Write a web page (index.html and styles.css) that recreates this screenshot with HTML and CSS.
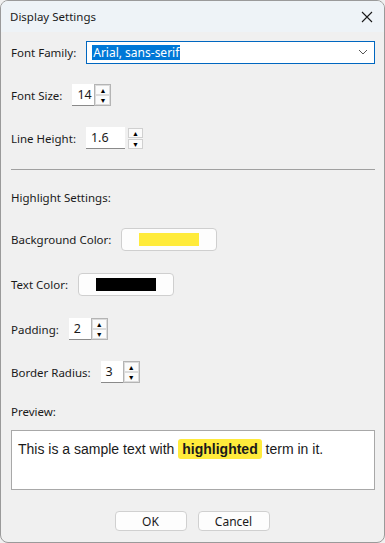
FILE: index.html
```html
<!DOCTYPE html>
<html lang="en">
  <head>
    <meta charset="UTF-8" />
    <title>Display Settings</title>
    <link rel="stylesheet" href="styles.css">
  </head>
  <body>
    <div class="window">
      <div class="titlebar">
        <span class="title">Display Settings</span>
        <svg class="close" width="12" height="12" viewBox="0 0 12 12">
          <path d="M1 1 L11 11 M11 1 L1 11" stroke="#1a1a1a" stroke-width="1.1" fill="none" />
        </svg>
      </div>

      <div class="content">
        <div class="row row-family">
          <label>Font Family:</label>
          <div class="combo">
            <span class="combo-text">Arial, sans-serif</span>
            <svg class="chevron" width="10" height="6" viewBox="0 0 10 6">
              <path d="M1 1 L5 5 L9 1" stroke="#555" stroke-width="1" fill="none" />
            </svg>
          </div>
        </div>

        <div class="row row-next">
          <label>Font Size:</label>
          <div class="spin">
            <span class="spin-input w22">14</span>
            <div class="spin-btns">
              <span class="spin-btn">&#9650;</span>
              <span class="spin-btn">&#9660;</span>
            </div>
          </div>
        </div>

        <div class="row row-next">
          <label>Line Height:</label>
          <div class="spin">
            <span class="spin-input w39">1.6</span>
            <div class="spin-btns apart">
              <span class="spin-btn">&#9650;</span>
              <span class="spin-btn">&#9660;</span>
            </div>
          </div>
        </div>

        <hr class="sep" />

        <div class="row row-heading">
          <label>Highlight Settings:</label>
        </div>

        <div class="row row-bg">
          <label>Background Color:</label>
          <button class="color-btn"><span class="swatch yellow"></span></button>
        </div>

        <div class="row row-wide">
          <label>Text Color:</label>
          <button class="color-btn"><span class="swatch black"></span></button>
        </div>

        <div class="row row-wide">
          <label>Padding:</label>
          <div class="spin">
            <span class="spin-input w22">2</span>
            <div class="spin-btns">
              <span class="spin-btn">&#9650;</span>
              <span class="spin-btn">&#9660;</span>
            </div>
          </div>
        </div>

        <div class="row row-next">
          <label>Border Radius:</label>
          <div class="spin">
            <span class="spin-input w22">3</span>
            <div class="spin-btns">
              <span class="spin-btn">&#9650;</span>
              <span class="spin-btn">&#9660;</span>
            </div>
          </div>
        </div>

        <div class="row row-preview-label">
          <label>Preview:</label>
        </div>

        <div class="preview">
          This is a sample text with <span class="mark">highlighted</span> term in it.
        </div>

        <div class="actions">
          <button class="btn">OK</button>
          <button class="btn">Cancel</button>
        </div>
      </div>
    </div>
  </body>
</html>
```

FILE: styles.css
```css
body {
  margin: 0;
  background: #f0f0f0;
  font-family: "Noto Sans", "Open Sans", sans-serif;
  font-size: 11.5px;
  color: #1a1a1a;
}
.window {
  box-sizing: border-box;
  width: 385px;
  height: 543px;
  border: 1px solid #9a9a9a;
  border-radius: 8px;
  background: #f0f0f0;
  overflow: hidden;
}
.titlebar {
  height: 31px;
  display: flex;
  align-items: center;
  justify-content: space-between;
  padding: 0 9px 0 9px;
  background: #eef3f7;
}
.title {
  font-size: 11.5px;
}
.close {
  margin-right: 2px;
}
.content {
  display: flex;
  flex-direction: column;
  padding: 0 9px 0 10px;
}
.row {
  display: flex;
  align-items: center;
  height: 22px;
}
.row label {
  margin-right: 10px;
  white-space: nowrap;
}
.row-family {
  margin-top: 9px;
}
.row-next {
  margin-top: 21px;
}
.row-wide {
  margin-top: 23px;
}
.row-heading {
  margin-top: 16px;
}
.row-bg {
  margin-top: 20px;
}
.row-preview-label {
  margin-top: 17px;
}
.combo {
  flex: 1;
  box-sizing: border-box;
  height: 23px;
  display: flex;
  align-items: center;
  justify-content: space-between;
  background: #fff;
  border: 1px solid #0067c0;
  padding: 0 6px 0 5px;
}
.combo-text {
  background: #0078d7;
  color: #fff;
  font-size: 12px;
  line-height: 15px;
  padding: 0 1px;
}
.sep {
  border: none;
  border-top: 1px solid #a0a0a0;
  margin: 20px 0 0 0;
}
.spin {
  display: flex;
  align-items: center;
}
.spin-input {
  box-sizing: border-box;
  height: 22px;
  background: #fff;
  border-bottom: 1px solid #8a8a8a;
  padding-left: 5px;
  line-height: 21px;
  font-size: 12.5px;
}
.w22 {
  width: 22px;
}
.w39 {
  width: 39px;
}
.spin-btns {
  display: flex;
  flex-direction: column;
  border: 1px solid #b4b4b4;
  background: #f4f4f4;
}
.spin-btns.apart {
  margin-left: 3px;
  border: none;
  gap: 1px;
}
.spin-btns.apart .spin-btn {
  border: 1px solid #d0d0d0;
}
.spin-btn {
  box-sizing: border-box;
  width: 15px;
  height: 10px;
  font-size: 7px;
  line-height: 9px;
  text-align: center;
  color: #000;
  background: #fbfbfb;
  border: 1px solid #dcdcdc;
}
.color-btn {
  box-sizing: border-box;
  width: 96px;
  height: 23px;
  background: #fdfdfd;
  border: 1px solid #cfcfcf;
  border-radius: 4px;
  display: flex;
  align-items: center;
  justify-content: center;
  padding: 0;
}
.swatch {
  width: 60px;
  height: 13px;
}
.yellow {
  background: #ffeb3b;
}
.black {
  background: #000;
}
.preview {
  box-sizing: border-box;
  margin-top: 8px;
  height: 60px;
  background: #fff;
  border: 1px solid #a8a8a8;
  padding: 8px 6px;
  font-family: "Liberation Sans", Arial, sans-serif;
  font-size: 14px;
  line-height: 20px;
}
.mark {
  background: #ffeb3b;
  font-weight: bold;
  padding: 2px 4px;
  border-radius: 3px;
}
.actions {
  display: flex;
  justify-content: center;
  gap: 11px;
  margin-top: 21px;
  padding-right: 2px;
}
.btn {
  box-sizing: border-box;
  width: 72px;
  height: 20px;
  background: #fdfdfd;
  border: 1px solid #d0d0d0;
  border-radius: 4px;
  font-family: "Noto Sans", "Open Sans", sans-serif;
  font-size: 12px;
  color: #1a1a1a;
  padding: 0;
}
```
